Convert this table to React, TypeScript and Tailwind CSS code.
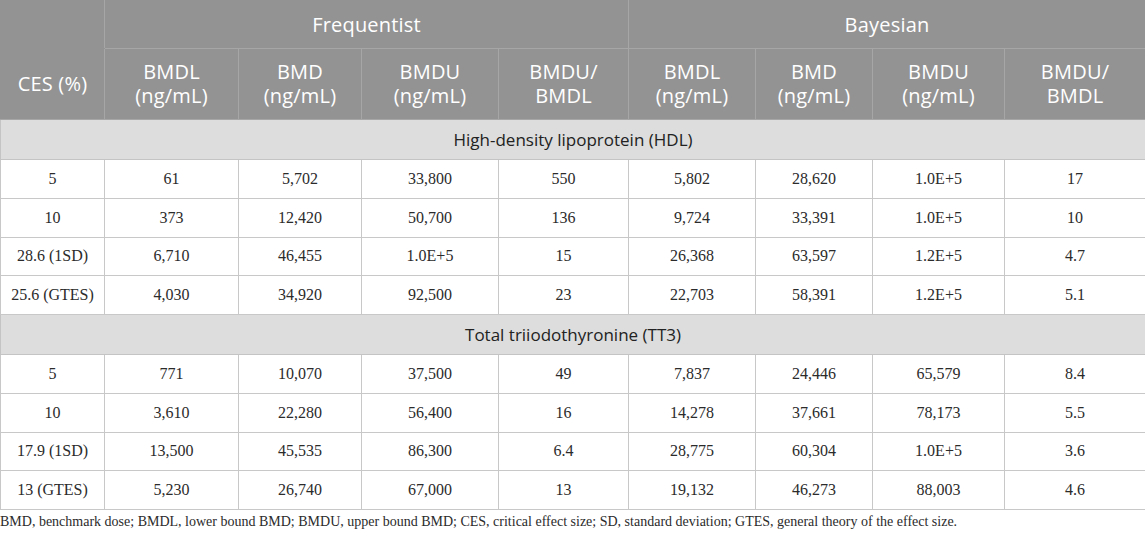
import React from "react";

const widths = [104, 134, 123, 137, 130, 127, 117, 132, 141];

const hdl = [
  ["5", "61", "5,702", "33,800", "550", "5,802", "28,620", "1.0E+5", "17"],
  ["10", "373", "12,420", "50,700", "136", "9,724", "33,391", "1.0E+5", "10"],
  ["28.6 (1SD)", "6,710", "46,455", "1.0E+5", "15", "26,368", "63,597", "1.2E+5", "4.7"],
  ["25.6 (GTES)", "4,030", "34,920", "92,500", "23", "22,703", "58,391", "1.2E+5", "5.1"],
];

const tt3 = [
  ["5", "771", "10,070", "37,500", "49", "7,837", "24,446", "65,579", "8.4"],
  ["10", "3,610", "22,280", "56,400", "16", "14,278", "37,661", "78,173", "5.5"],
  ["17.9 (1SD)", "13,500", "45,535", "86,300", "6.4", "28,775", "60,304", "1.0E+5", "3.6"],
  ["13 (GTES)", "5,230", "26,740", "67,000", "13", "19,132", "46,273", "88,003", "4.6"],
];

const subHeads = [
  ["BMDL", "(ng/mL)"],
  ["BMD", "(ng/mL)"],
  ["BMDU", "(ng/mL)"],
  ["BMDU/", "BMDL"],
];

function Section({ title, rows }: { title: string; rows: string[][] }) {
  return (
    <>
      <tr className="h-[40px] bg-[#dcdddc]">
        <td
          colSpan={9}
          className="border border-[#c4c4c4] text-center text-[17px] text-[#222] font-['Open_Sans',sans-serif]"
        >
          {title}
        </td>
      </tr>
      {rows.map((r, i) => (
        <tr key={i} className="h-[38.75px] bg-white">
          {r.map((c, j) => (
            <td
              key={j}
              className="border border-[#c8c8c8] text-center text-[16px] text-[#2b2b2b] font-['Liberation_Serif',serif]"
            >
              {c}
            </td>
          ))}
        </tr>
      ))}
    </>
  );
}

export default function App() {
  return (
    <div className="w-[1145px] h-[534px] bg-white overflow-hidden">
      <table className="w-[1145px] table-fixed border-collapse">
        <colgroup>
          {widths.map((w, i) => (
            <col key={i} style={{ width: w }} />
          ))}
        </colgroup>
        <thead className="bg-[#939393] text-white font-['Open_Sans',sans-serif] text-[20px] leading-[24px] tracking-[0.2px]">
          <tr className="h-[48px]">
            <th className="font-normal border border-[#a6a6a6] border-l-[#939393] border-t-[#939393] border-b-[#939393]"></th>
            <th colSpan={4} className="font-normal border border-[#a6a6a6] border-t-[#939393]">
              Frequentist
            </th>
            <th colSpan={4} className="font-normal border border-[#a6a6a6] border-t-[#939393] border-r-[#939393]">
              Bayesian
            </th>
          </tr>
          <tr className="h-[71px]">
            <th className="font-normal border border-[#a6a6a6] border-l-[#939393] border-t-[#939393]">
              CES (%)
            </th>
            {[...subHeads, ...subHeads].map((h, i) => (
              <th key={i} className="font-normal border border-[#a6a6a6] last:border-r-[#939393]">
                {h[0]}
                <br />
                {h[1]}
              </th>
            ))}
          </tr>
        </thead>
        <tbody>
          <Section title="High-density lipoprotein (HDL)" rows={hdl} />
          <Section title="Total triiodothyronine (TT3)" rows={tt3} />
        </tbody>
      </table>
      <p className="pt-[1px] text-[14px] text-[#2b2b2b] font-['Liberation_Serif',serif]">
        BMD, benchmark dose; BMDL, lower bound BMD; BMDU, upper bound BMD; CES, critical effect size; SD, standard deviation; GTES, general theory of the effect size.
      </p>
    </div>
  );
}
